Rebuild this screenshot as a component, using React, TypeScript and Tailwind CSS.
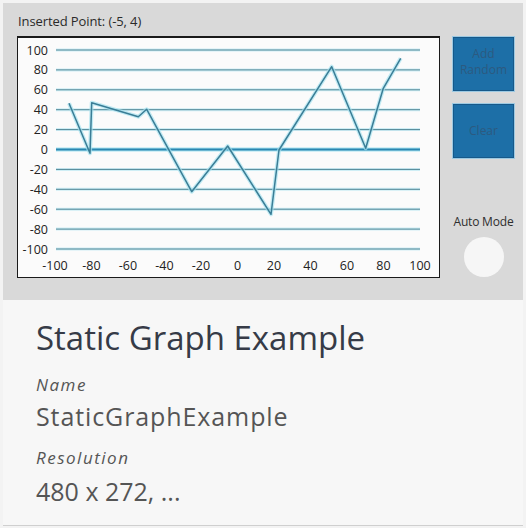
import React from "react";

const pts: [number, number][] = [
  [69, 103.3],
  [90, 153.3],
  [91.7, 102.7],
  [138.3, 116.7],
  [146.7, 109.3],
  [191.7, 191.7],
  [227.7, 146],
  [271, 214.3],
  [279, 150],
  [331.7, 66.7],
  [365.7, 148.3],
  [383.3, 88.3],
  [400.7, 58.3],
];

const yTicks = Array.from({ length: 11 }, (_, i) => ({ v: 100 - 20 * i, y: 50 + i * 19.9 }));
const xTicks = Array.from({ length: 11 }, (_, i) => ({ v: -100 + 20 * i, x: 55 + i * 36.5 }));

function Chart() {
  const d = pts.map((p, i) => `${i ? "L" : "M"}${p[0]} ${p[1]}`).join(" ");
  return (
    <svg width="421" height="239" className="block">
      <g transform="translate(-18,-38)" fontFamily="'Open Sans', sans-serif" fontSize="12.5" fill="#222">
        {yTicks.map((t) => (
          <g key={t.v}>
            <line x1={56} x2={420} y1={t.y} y2={t.y} stroke={t.v === 0 ? "#a8e4f2" : "#cfeef5"} strokeWidth={t.v === 0 ? 4 : 3} />
            <line x1={56} x2={420} y1={t.y} y2={t.y} stroke={t.v === 0 ? "#2a86b0" : "#4f8595"} strokeWidth={t.v === 0 ? 2 : 1} />
            <text x={48} y={t.y} textAnchor="end" dominantBaseline="central" stroke="none">
              {t.v}
            </text>
          </g>
        ))}
        {xTicks.map((t) => (
          <text key={t.v} x={t.x} y={265} textAnchor="middle" dominantBaseline="central">
            {t.v}
          </text>
        ))}
        <path d={d} fill="none" stroke="#a6e3f0" strokeWidth={4} strokeOpacity={0.7} strokeLinejoin="round" />
        <path d={d} fill="none" stroke="#3a7d96" strokeWidth={1.5} strokeLinejoin="round" />
      </g>
    </svg>
  );
}

export default function App() {
  return (
    <div className="w-[526px] h-[528px] bg-[#f3f3f3] pt-[3px] px-[3px] font-['Open_Sans',sans-serif]">
      <div className="flex h-[297px] bg-[#d9d9d9]">
        <div className="flex flex-col pl-[14px] pt-[6px]">
          <div className="h-[24px] leading-[24px] text-[13px] text-[#2a2a2a] pl-[1px] tracking-[-0.1px]">Inserted Point: (-5, 4)</div>
          <div className="mt-[3px] w-[423px] h-[242px] bg-[#fbfbfb] border border-t-2 border-[#1a1a1a]">
            <Chart />
          </div>
        </div>
        <div className="ml-[13px] w-[61px] pt-[34px] flex flex-col items-center">
          <div className="w-[61px] h-[54px] bg-[#1d6fa7] border border-[#17598a] shadow-[0_0_0_1px_#9cc9e2] flex flex-col items-center justify-center text-[12px] leading-[16px] text-[#2c5a80] pb-[4px]">
            <span>Add</span>
            <span>Random</span>
          </div>
          <div className="mt-[13px] w-[61px] h-[54px] bg-[#1d6fa7] border border-[#17598a] shadow-[0_0_0_1px_#9cc9e2] flex items-center justify-center text-[12px] leading-[16px] text-[#2c5a80]">
            Clear
          </div>
          <div className="mt-[56px] h-[16px] leading-[16px] text-[12px] text-[#2e2e2e] whitespace-nowrap tracking-[-0.2px]">Auto Mode</div>
          <div className="mt-[7px] w-[40px] h-[40px] rounded-full bg-[#f6f6f6]" />
        </div>
      </div>
      <div className="h-[226px] bg-[#f7f7f7] border-b border-[#cfcfcf] pl-[33px] pt-[16px] flex flex-col">
        <div className="text-[33px] leading-[44px] font-medium text-[#363b47]">Static Graph Example</div>
        <div className="mt-[14px] text-[17px] leading-[22px] italic text-[#555] tracking-[1.5px]">Name</div>
        <div className="mt-[4px] text-[25px] leading-[32px] text-[#555] tracking-[0.9px]">StaticGraphExample</div>
        <div className="mt-[15px] text-[17px] leading-[22px] italic text-[#555] tracking-[1.5px]">Resolution</div>
        <div className="mt-[6px] text-[25px] leading-[32px] text-[#555]">480 x 272, ...</div>
      </div>
    </div>
  );
}
